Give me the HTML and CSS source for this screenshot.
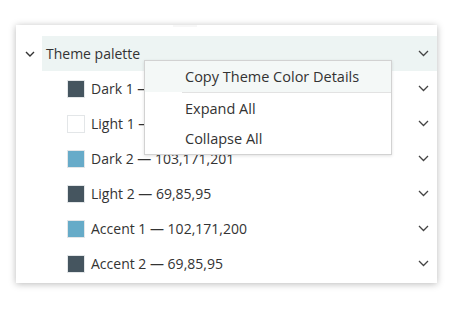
FILE: index.html
```html
<html>
<head>
<title>Theme palette</title>
<meta charset="UTF-8">
<link rel="stylesheet" href="styles.css">
</head>
<body>

<div class="panel">
	<div class="grip"></div>
	<div class="tree">
		<div class="row head">
			<span class="toggle"><svg width="10" height="6" viewBox="0 0 10 6"><path d="M1 1 L5 5 L9 1" fill="none" stroke="#333" stroke-width="1.4"/></svg></span>
			<div class="row_body">
				<span class="label">Theme palette</span>
				<span class="more"><svg width="11" height="7" viewBox="0 0 11 7"><path d="M1 1 L5.5 5.5 L10 1" fill="none" stroke="#444" stroke-width="1.3"/></svg></span>
			</div>
		</div>

		<!-- one row per theme color -->
		<div class="row item">
			<span class="swatch" style="background: rgb(69,85,95)"></span>
			<span class="label">Dark 1 — 69,85,95</span>
			<span class="more"><svg width="11" height="7" viewBox="0 0 11 7"><path d="M1 1 L5.5 5.5 L10 1" fill="none" stroke="#444" stroke-width="1.3"/></svg></span>
		</div>
		<div class="row item">
			<span class="swatch" style="background: rgb(255,255,255)"></span>
			<span class="label">Light 1 — 255,255,255</span>
			<span class="more"><svg width="11" height="7" viewBox="0 0 11 7"><path d="M1 1 L5.5 5.5 L10 1" fill="none" stroke="#444" stroke-width="1.3"/></svg></span>
		</div>
		<div class="row item">
			<span class="swatch" style="background: rgb(103,171,201)"></span>
			<span class="label">Dark 2 — 103,171,201</span>
			<span class="more"><svg width="11" height="7" viewBox="0 0 11 7"><path d="M1 1 L5.5 5.5 L10 1" fill="none" stroke="#444" stroke-width="1.3"/></svg></span>
		</div>
		<div class="row item">
			<span class="swatch" style="background: rgb(69,85,95)"></span>
			<span class="label">Light 2 — 69,85,95</span>
			<span class="more"><svg width="11" height="7" viewBox="0 0 11 7"><path d="M1 1 L5.5 5.5 L10 1" fill="none" stroke="#444" stroke-width="1.3"/></svg></span>
		</div>
		<div class="row item">
			<span class="swatch" style="background: rgb(102,171,200)"></span>
			<span class="label">Accent 1 — 102,171,200</span>
			<span class="more"><svg width="11" height="7" viewBox="0 0 11 7"><path d="M1 1 L5.5 5.5 L10 1" fill="none" stroke="#444" stroke-width="1.3"/></svg></span>
		</div>
		<div class="row item">
			<span class="swatch" style="background: rgb(69,85,95)"></span>
			<span class="label">Accent 2 — 69,85,95</span>
			<span class="more"><svg width="11" height="7" viewBox="0 0 11 7"><path d="M1 1 L5.5 5.5 L10 1" fill="none" stroke="#444" stroke-width="1.3"/></svg></span>
		</div>
	</div>

	<!-- context menu over the tree -->
	<div class="menu">
		<div class="menu_item hover">Copy Theme Color Details</div>
		<div class="menu_sep"></div>
		<div class="menu_item">Expand All</div>
		<div class="menu_item">Collapse All</div>
	</div>
</div>

</body>
</html>
```

FILE: styles.css
```css
body {
	margin: 0px;
	padding: 0px;
	background: #fff;
	color: #333;
	font-family: "Open Sans", "Noto Sans", Arial, sans-serif;
	font-size: 14px;
}

.panel {
	position: relative;
	margin: 25px 0px 0px 16px;
	width: 421px;
	height: 258px;
	background: #fff;
	box-shadow: 0px 1px 7px rgba(0,0,0,0.28);
}

.grip {
	position: absolute;
	top: 0px;
	left: 157px;
	width: 24px;
	height: 2px;
	background: #f7f7f7;
}

.tree {
	padding-top: 11px;
}

.row {
	display: flex;
	align-items: center;
	height: 35px;
}

.head .toggle {
	width: 25px;
	display: flex;
	justify-content: center;
	padding-left: 1px;
}

.head .row_body {
	flex: 1;
	display: flex;
	align-items: center;
	height: 35px;
	background: #edf4f3;
	padding-left: 4px;
}

.label {
	flex: 1;
	white-space: nowrap;
}

.more {
	width: 26px;
	display: flex;
	justify-content: center;
	padding-right: 1px;
}

.item {
	padding-left: 51px;
}

.swatch {
	width: 16px;
	height: 16px;
	border: 1px solid #e3e6e8;
	margin-right: 6px;
}

.menu {
	position: absolute;
	left: 128px;
	top: 35px;
	width: 246px;
	background: #fff;
	border: 1px solid #d2d2d2;
	box-shadow: 0px 1px 3px rgba(0,0,0,0.12);
	font-size: 14.5px;
}

.menu_item {
	height: 30px;
	line-height: 30px;
	padding-left: 40px;
	white-space: nowrap;
}

.menu_item.hover {
	height: 31px;
	line-height: 31px;
	background: #f4f8f7;
}

.menu_sep {
	height: 1px;
	margin-left: 37px;
	background: #e2e2e2;
	margin-top: 0px;
	margin-bottom: 1px;
}
```
